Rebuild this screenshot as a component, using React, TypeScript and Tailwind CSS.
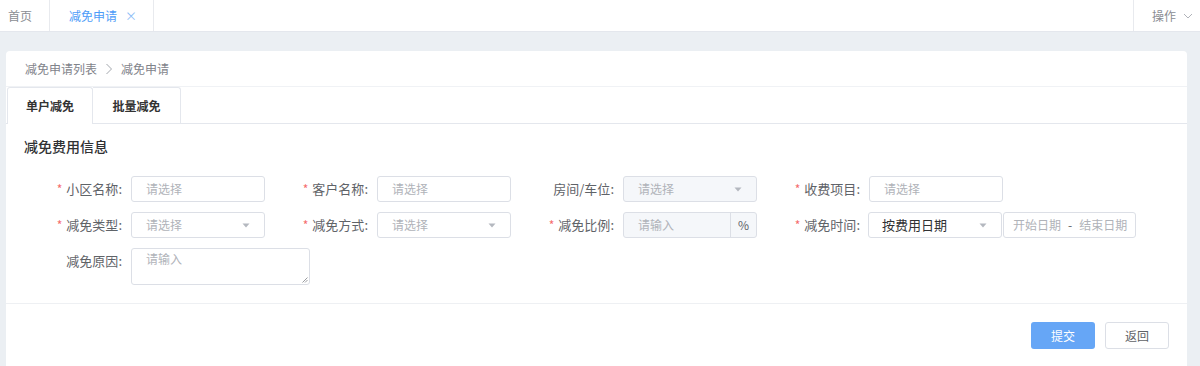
import React from 'react'

const font = { fontFamily: '"Noto Sans CJK SC", "Noto Sans", sans-serif' }

const Caret = () => (
  <svg width="8" height="5" viewBox="0 0 8 5" className="shrink-0">
    <path d="M0.5 0.5 L7.5 0.5 L4 4.5 Z" fill="#b4b8bf" />
  </svg>
)

type FieldProps = {
  label: string
  required?: boolean
  children: React.ReactNode
}

const Field: React.FC<FieldProps> = ({ label, required, children }) => (
  <div className="flex items-start">
    <label className="w-[115px] shrink-0 pr-[9px] h-[26px] flex items-center justify-end text-[13px] text-[#5f6368]">
      {required && <span className="text-[#f56c6c] mr-[4px] text-[12px]">*</span>}
      {label}:
    </label>
    {children}
  </div>
)

const TextBox: React.FC<{ placeholder: string; select?: boolean; disabled?: boolean }> = ({ placeholder, select, disabled }) => (
  <div
    className={`w-[134px] shrink-0 h-[26px] rounded-[3px] border border-[#dcdfe6] flex items-center justify-between pl-[14px] pr-[14px] text-[12px] text-[#b0b3b9] ${
      disabled ? 'bg-[#f5f7fa]' : 'bg-white'
    }`}
  >
    <span>{placeholder}</span>
    {select && <Caret />}
  </div>
)

export default function App() {
  return (
    <div className="w-[1200px] h-[366px] overflow-hidden bg-[#ebeff3]" style={font}>
      {/* Tab bar */}
      <div className="h-[32px] bg-white border-b border-[#e4e7ed] flex items-stretch text-[12px]">
        <div className="w-[50px] border-r border-[#e8eaee] flex items-center pl-[8px] text-[#8a8d93]">首页</div>
        <div className="w-[104px] border-r border-[#e8eaee] flex items-center pl-[19px] text-[#4d9cf8]">
          <span>减免申请</span>
          <span className="ml-[8px] text-[12px] text-[#8cbcf7]">×</span>
        </div>
        <div className="flex-1" />
        <div className="w-[67px] border-l border-[#e8eaee] flex items-center pl-[18px] text-[#8a8d93]">
          <span>操作</span>
          <svg width="10" height="6" viewBox="0 0 10 6" className="ml-[7px]">
            <path d="M1 1 L5 5 L9 1" stroke="#b0b3b9" strokeWidth="1" fill="none" />
          </svg>
        </div>
      </div>

      {/* Card */}
      <div className="mt-[19px] ml-[6px] w-[1181px] bg-white rounded-t-[4px]">
        <div className="h-[36px] flex items-center pl-[19px] text-[12px] text-[#7f838a] border-b border-[#f0f2f5]">
          <span>减免申请列表</span>
          <svg width="8" height="12" viewBox="0 0 8 12" className="mx-[8px]">
            <path d="M1.5 1 L6.5 6 L1.5 11" stroke="#a4a8ae" strokeWidth="1" fill="none" />
          </svg>
          <span>减免申请</span>
        </div>

        <div className="flex h-[37px] border-b border-[#e4e7ed]">
          <div className="w-[86px] ml-[1px] h-[37px] -mb-px bg-white border border-b-0 border-[#e4e7ed] rounded-t-[3px] flex items-center justify-center text-[12px] font-bold text-[#333]">
            单户减免
          </div>
          <div className="w-[88px] h-[36px] border-t border-r border-[#e4e7ed] rounded-tr-[3px] flex items-center justify-center text-[12px] font-bold text-[#333]">
            批量减免
          </div>
        </div>

        <div className="pl-[18px] pt-[12px] text-[14px] font-medium text-[#303133]">减免费用信息</div>

        <div className="pl-[10px] pt-[19px] pb-[18px] grid grid-cols-[246px_246px_246px_auto] gap-y-[10px] border-b border-[#eef0f3]">
          <Field label="小区名称" required>
            <TextBox placeholder="请选择" />
          </Field>
          <Field label="客户名称" required>
            <TextBox placeholder="请选择" />
          </Field>
          <Field label="房间/车位">
            <TextBox placeholder="请选择" select disabled />
          </Field>
          <Field label="收费项目" required>
            <TextBox placeholder="请选择" />
          </Field>

          <Field label="减免类型" required>
            <TextBox placeholder="请选择" select />
          </Field>
          <Field label="减免方式" required>
            <TextBox placeholder="请选择" select />
          </Field>
          <Field label="减免比例" required>
            <div className="w-[134px] shrink-0 h-[26px] rounded-[3px] border border-[#dcdfe6] flex bg-[#f5f7fa] text-[12px]">
              <div className="flex-1 flex items-center pl-[14px] text-[#b0b3b9]">请输入</div>
              <div className="w-[26px] border-l border-[#dcdfe6] flex items-center justify-center text-[#5f6368]">%</div>
            </div>
          </Field>
          <Field label="减免时间" required>
            <div className="flex gap-[1px] shrink-0 -ml-px">
              <div className="w-[134px] h-[26px] rounded-[3px] border border-[#dcdfe6] flex items-center justify-between pl-[13px] pr-[14px] text-[13px] text-[#303133]">
                <span>按费用日期</span>
                <Caret />
              </div>
              <div className="w-[133px] h-[26px] rounded-[3px] border border-[#dcdfe6] flex items-center pl-[9px] text-[12px] text-[#b0b3b9]">
                <span>开始日期</span>
                <span className="mx-[7px] text-[#606266]">-</span>
                <span>结束日期</span>
              </div>
            </div>
          </Field>

          <Field label="减免原因">
            <div className="relative shrink-0 w-[179px] h-[37px] rounded-[3px] border border-[#dcdfe6] pl-[14px] pt-[1px] text-[12px] text-[#b0b3b9]">
              请输入
              <svg width="6" height="6" viewBox="0 0 6 6" className="absolute right-[1px] bottom-[1px]">
                <path d="M5.5 0.5 L0.5 5.5 M5.5 3 L3 5.5" stroke="#808388" strokeWidth="0.8" />
              </svg>
            </div>
          </Field>
        </div>

        <div className="flex justify-end gap-[10px] pr-[18px] pt-[18px] pb-[20px]">
          <button className="w-[64px] h-[27px] rounded-[3px] bg-[#66a6f6] text-white text-[12px]">提交</button>
          <button className="w-[64px] h-[27px] rounded-[3px] bg-white border border-[#dcdfe6] text-[#606266] text-[12px]">返回</button>
        </div>
      </div>
    </div>
  )
}
